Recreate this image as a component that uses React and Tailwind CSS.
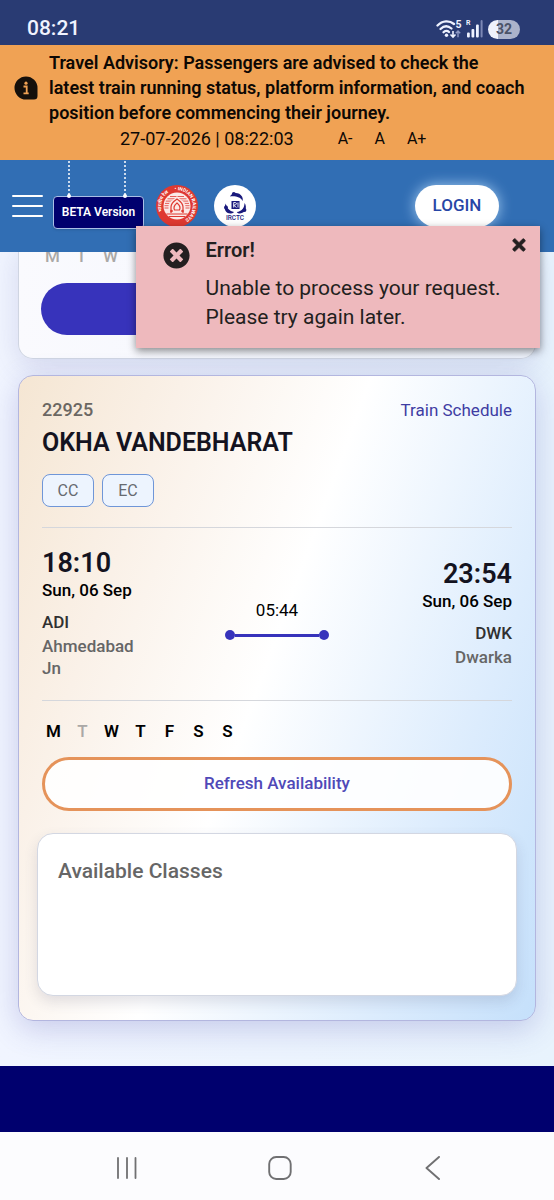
import React from 'react';
import { FaTimes, FaTimesCircle } from 'react-icons/fa';

const DAYS = [
  { label: 'M', on: true },
  { label: 'T', on: false },
  { label: 'W', on: true },
  { label: 'T', on: true },
  { label: 'F', on: true },
  { label: 'S', on: true },
  { label: 'S', on: true },
];

function WifiIcon() {
  return (
    <svg className="h-5 w-7" viewBox="0 0 28 20" fill="none" aria-label="Wi-Fi 5">
      <g stroke="#eef2ff" strokeWidth="2.300" strokeLinecap="round">
        <path d="M1.500 6.500C6.500 1.200 13.500 1.200 18 5" />
        <path d="M4.500 10C8 6.500 12 6.500 15.500 9.500" />
        <path d="M7.500 13.200C9 11.500 11.500 11.500 13 13" />
      </g>
      <circle cx="10.500" cy="16.200" r="1.700" fill="#eef2ff" />
      <path d="M17 12v5.500M14.500 15.500L17 18L19.500 15.500" stroke="#eef2ff" strokeWidth="1.600" />
      <path d="M22 18.200V12.300M19.800 14.300L22 12L24.200 14.300" stroke="#8d98c4" strokeWidth="1.400" />
      <text x="19.500" y="9" fontSize="10.500" fontWeight="700" fill="#eef2ff" fontFamily="Roboto, sans-serif">5</text>
    </svg>
  );
}

function SignalIcon() {
  return (
    <svg className="h-5 w-5" viewBox="0 0 20 20" aria-label="Signal, roaming">
      <text x="0" y="6" fontSize="7" fontWeight="700" fill="#eef2ff" fontFamily="Roboto, sans-serif">R</text>
      <g fill="#eef2ff">
        <rect x="1" y="13.500" width="2.800" height="5" rx="1" />
        <rect x="5.500" y="10" width="2.800" height="8.500" rx="1" />
        <rect x="10" y="5.500" width="2.800" height="13" rx="1" />
      </g>
      <rect x="14.600" y="1" width="2" height="17.500" rx="1" fill="#7c88b5" />
    </svg>
  );
}

function StatusBar() {
  return (
    <div className="flex h-[45px] items-end justify-between bg-[#293b73] pb-[6px] pl-[27px] pr-[34px] text-[#f0f3ff]">
      <span className="text-[21px] font-medium leading-[21px]">08:21</span>
      <div className="flex items-center gap-[2px]">
        <WifiIcon />
        <SignalIcon />
        <span className="flex h-[19px] w-8 items-center justify-center rounded-full bg-linear-to-r from-[#eef1fb] from-32% to-[#abb3cb] to-32% text-[14px] font-bold leading-none text-[#4a5267]">
          32
        </span>
      </div>
    </div>
  );
}

function Advisory() {
  return (
    <section className="bg-[#f0a254] px-[14px] pb-[9px] pt-[5px] text-[#0d0804]">
      <div className="flex items-center gap-[11px]">
        <svg className="h-6 w-6 shrink-0" viewBox="0 0 24 24" aria-hidden="true">
          <path d="M12 .5a11.500 11.500 0 0 1 11.500 11.500v8a3.500 3.500 0 0 1-3.500 3.500h-8a11.500 11.500 0 0 1 0-23z" fill="#15100b" />
          <circle cx="12" cy="7.200" r="1.600" fill="#f0a254" />
          <path d="M9.500 10.500h3.200v6.500M9.500 17.300h5.200" stroke="#f0a254" strokeWidth="1.800" fill="none" />
        </svg>
        <p className="-mr-[10px] text-[18px] font-semibold leading-[25px]">
          Travel Advisory: Passengers are advised to check the
          <br />
          latest train running status, platform information, and coach
          <br />
          position before commencing their journey.
        </p>
      </div>
      <div className="flex items-center pl-[106px] pt-[2px] leading-6">
        <time className="mr-11 text-[18px]">27-07-2026 | 08:22:03</time>
        <div className="flex gap-[22px] text-[16px]">
          <button type="button">A-</button>
          <button type="button">A</button>
          <button type="button">A+</button>
        </div>
      </div>
    </section>
  );
}

function RailwaysEmblem() {
  return (
    <svg className="h-[42px] w-[42px]" viewBox="0 0 42 42" aria-label="Indian Railways">
      <defs>
        <path id="emblem-ring" d="M21 36.800A15.800 15.800 0 1 1 21.010 36.800" />
      </defs>
      <circle cx="21" cy="21" r="21" fill="#df3931" />
      <text fontSize="4.800" fontWeight="700" fill="#fff" fontFamily="Roboto, 'Noto Sans', sans-serif">
        <textPath href="#emblem-ring" startOffset="19">भारतीय रेल</textPath>
        <textPath href="#emblem-ring" startOffset="47">• INDIAN RAILWAYS</textPath>
      </text>
      <circle cx="21" cy="21" r="13.500" fill="#fbe9e7" />
      <g stroke="#df3931" strokeWidth=".8" fill="none">
        <path d="M14 11.500h14M11.500 13.800h19M9.800 16.100h22.400M9 18.400h24M8.500 20.700h25M8.500 23h25" />
      </g>
      <path d="M12.500 29v-7c0-5 3-6 5.500-8l3-3l3 3c2.500 2 5.500 3 5.500 8v7z" fill="#fbe9e7" />
      <g stroke="#df3931" strokeWidth="1.200" fill="none">
        <path d="M15 28v-6c0-4 3-6 6-8c3 2 6 4 6 8v6" />
        <path d="M18.500 25c-1.500-3 0-5 2.500-7c2.500 2 4 4 2.500 7z" />
        <path d="M10.500 29h21M13 31.500h16" />
      </g>
      <circle cx="15.500" cy="26" r="1.300" fill="#df3931" />
      <circle cx="26.500" cy="26" r="1.300" fill="#df3931" />
    </svg>
  );
}

function IrctcLogo() {
  return (
    <svg className="h-[42px] w-[42px]" viewBox="0 0 42 42" aria-label="IRCTC">
      <circle cx="21" cy="21" r="21" fill="#fff" />
      <g fill="#19197c">
        <path d="M16 11.500C18 7 25 6.500 28 11.500C28.800 13 29 14.500 28.500 16C27 12.500 22 10.800 16 11.500z" />
        <path d="M30.500 18C33.500 22 31.500 28 26 28.500C24.500 28.500 23.500 28 22.800 27C27.500 26.500 30.500 23 30.500 18z" />
        <path d="M11.800 18.500C9 24 12 29 17 28.500C18.500 28.300 19.500 27.800 20 27C15.500 26 12.500 23 11.800 18.500z" />
        <circle cx="19.800" cy="9" r="1.900" />
        <circle cx="30.500" cy="25" r="1.900" />
        <circle cx="12" cy="22.500" r="1.900" />
        <rect x="17.500" y="16" width="8" height="8" />
      </g>
      <path d="M19.700 17.500v5M19.700 17.500c4 0 4 2 0 2.800l2.800 2.200M24 17.500v5" stroke="#fff" strokeWidth=".9" fill="none" />
      <text x="21" y="35" textAnchor="middle" fontSize="6.500" fontWeight="500" fill="#19197c" fontFamily="Roboto, sans-serif">IRCTC</text>
    </svg>
  );
}

function Toast() {
  return (
    <div
      role="alert"
      className="absolute right-[14px] top-[66px] z-20 flex w-[73%] items-start bg-[#eeb9bd] pb-4 pl-[27px] pr-3 pt-[10px] text-[#231f20] shadow-[0_3px_8px_rgba(0,0,0,0.45)]"
    >
      <FaTimesCircle className="mt-[6px] h-[27px] w-[27px] shrink-0" />
      <div className="ml-4 flex-1">
        <h2 className="text-[20px] font-semibold leading-7">Error!</h2>
        <p className="whitespace-nowrap pt-[10px] text-[21px] leading-[29px]">
          Unable to process your request.
          <br />
          Please try again later.
        </p>
      </div>
      <button type="button" aria-label="Close" className="-ml-6">
        <FaTimes className="h-[18px] w-[18px] stroke-current stroke-[24px]" />
      </button>
    </div>
  );
}

function Header() {
  return (
    <header className="relative z-10 flex h-[92px] items-center bg-[#316eb4] pl-3 pr-[55px]">
      <button type="button" aria-label="Menu" className="flex w-[31px] flex-col gap-2">
        <span className="h-[2px] rounded bg-white" />
        <span className="h-[2px] rounded bg-white" />
        <span className="h-[2px] rounded bg-white" />
      </button>
      <div className="relative ml-[10px] mt-3 flex h-[33px] w-[91px] items-center justify-center rounded-[4px] border border-[#a9bfe6] bg-[#00006e] text-[12px] font-semibold text-white shadow-sm">
        <svg className="absolute bottom-[29px] left-[10px] h-[38px] w-[66px]" viewBox="0 0 66 38" aria-hidden="true">
          <path d="M5 0v34M61 0v34" stroke="#fff" strokeWidth="1.500" strokeDasharray="2 2" />
          <circle cx="5" cy="35" r="2" fill="#fff" />
          <circle cx="61" cy="35" r="2" fill="#fff" />
        </svg>
        BETA Version
      </div>
      <div className="ml-3 flex gap-4">
        <RailwaysEmblem />
        <IrctcLogo />
      </div>
      <button
        type="button"
        className="ml-auto h-[42px] w-[84px] rounded-full bg-white text-[17px] font-medium text-[#2746a6] shadow-[0_0_14px_rgba(190,225,255,0.8)]"
      >
        LOGIN
      </button>
      <Toast />
    </header>
  );
}

function Days({ faded }) {
  return (
    <ul className="flex text-[17px] leading-6">
      {DAYS.map((d, i) => (
        <li
          key={i}
          className={
            'w-[29px] pr-[6px] text-center ' +
            (faded || !d.on ? 'font-medium text-[#aaa8a6]' : 'font-semibold text-black')
          }
        >
          {d.label}
        </li>
      ))}
    </ul>
  );
}

function Station({ time, date, code, name, right }) {
  return (
    <div className={'w-[104px] font-medium ' + (right ? 'text-right' : '')}>
      <p className="text-[27px] font-semibold leading-8 text-[#14131f]">{time}</p>
      <p className="whitespace-nowrap text-[17px] leading-[22px] text-black">{date}</p>
      <p className="pt-[10px] text-[17px] leading-[22px] text-[#303030]">{code}</p>
      <p className="pt-[2px] text-[17px] leading-[22px] text-[#666]">{name}</p>
    </div>
  );
}

function TrainCard() {
  return (
    <article className="mx-[18px] mt-4 rounded-[15px] border border-[#b3b6df] bg-[linear-gradient(110deg,#f5e6d3_0%,#faf1e8_22%,#ffffff_47%,#dcecfd_78%,#c5e0fb_100%)] px-[23px] pb-6 pt-[23px] shadow-[0_8px_30px_rgba(70,70,170,0.24)]">
      <div className="flex justify-between leading-[22px]">
        <span className="text-[18px] font-medium text-[#6b6762]">22925</span>
        <a href="#schedule" className="text-[17px] text-[#3f3da3]">Train Schedule</a>
      </div>
      <h2 className="pt-[6px] text-[25px] font-semibold leading-8 text-[#14131f]">OKHA VANDEBHARAT</h2>
      <div className="mt-[15px] flex gap-2 text-[16px] text-[#666a70]">
        <button type="button" className="h-[33px] w-[52px] rounded-lg border border-[#6f96d8] bg-[#edf4fe]">CC</button>
        <button type="button" className="h-[33px] w-[52px] rounded-lg border border-[#6f96d8] bg-[#edf4fe]">EC</button>
      </div>
      <div className="mt-5 flex items-center justify-between border-y border-[#d5d7dc] pb-[21px] pt-[19px]">
        <Station time="18:10" date="Sun, 06 Sep" code="ADI" name="Ahmedabad Jn" />
        <div className="flex w-[104px] flex-col items-center gap-2 pt-3">
          <span className="text-[17px] leading-6 text-black">05:44</span>
          <div className="flex w-full items-center">
            <span className="h-[10px] w-[10px] rounded-full bg-[#3733bb]" />
            <span className="h-[3px] flex-1 bg-[#3733bb]" />
            <span className="h-[10px] w-[10px] rounded-full bg-[#3733bb]" />
          </div>
        </div>
        <Station time="23:54" date="Sun, 06 Sep" code="DWK" name="Dwarka" right />
      </div>
      <div className="pt-[18px]">
        <Days />
      </div>
      <button
        type="button"
        className="mt-[14px] h-[54px] w-full rounded-full border-[3px] border-[#e5935a] bg-white/90 text-[17px] font-medium text-[#5049b8]"
      >
        Refresh Availability
      </button>
      <section className="-mx-[5px] mt-[22px] min-h-[163px] rounded-2xl border border-[#d3d7e2] bg-white px-5 pt-[23px] shadow-[0_6px_14px_rgba(60,60,90,0.14)]">
        <h3 className="text-[21px] font-medium leading-7 text-[#666]">Available Classes</h3>
      </section>
    </article>
  );
}

export default function App() {
  return (
    <div className="flex min-h-screen flex-col bg-white font-[Roboto,'Noto_Sans',sans-serif]">
      <StatusBar />
      <Advisory />
      <Header />
      <main className="overflow-hidden bg-linear-to-r from-[#f1f5ff] to-[#e8f3fd] pb-[45px]">
        <article className="-mt-2 mx-[18px] rounded-b-[15px] border border-t-0 border-[#cfd5e2] bg-linear-to-r from-[#fafafe] to-[#eff4fd] px-[22px] pb-[23px] shadow-[0_8px_30px_rgba(70,70,150,0.16)]">
          <Days faded />
          <button type="button" aria-label="Check availability" className="mt-[15px] block h-[52px] w-full rounded-full bg-[#3733bb]" />
        </article>
        <TrainCard />
      </main>
      <footer className="h-[66px] bg-[#00006e]" />
      <nav className="flex flex-1 items-center justify-around bg-[#fcfcfe] pl-[50px] pr-[44px] pt-1">
        <button type="button" aria-label="Recent apps">
          <svg className="h-6 w-6" viewBox="0 0 24 24" stroke="#707072" strokeWidth="1.800" strokeLinecap="round">
            <path d="M3 2v20M12 2v20M20.500 2v20" />
          </svg>
        </button>
        <button type="button" aria-label="Home">
          <svg className="h-6 w-6" viewBox="0 0 24 24" fill="none" stroke="#707072" strokeWidth="1.900">
            <rect x="1.200" y="1" width="21.500" height="22" rx="7" />
          </svg>
        </button>
        <button type="button" aria-label="Back">
          <svg className="h-6 w-6" viewBox="0 0 24 24" fill="none" stroke="#707072" strokeWidth="1.900" strokeLinecap="round" strokeLinejoin="round">
            <path d="M18 1L5.500 12L18 23" />
          </svg>
        </button>
      </nav>
    </div>
  );
}
